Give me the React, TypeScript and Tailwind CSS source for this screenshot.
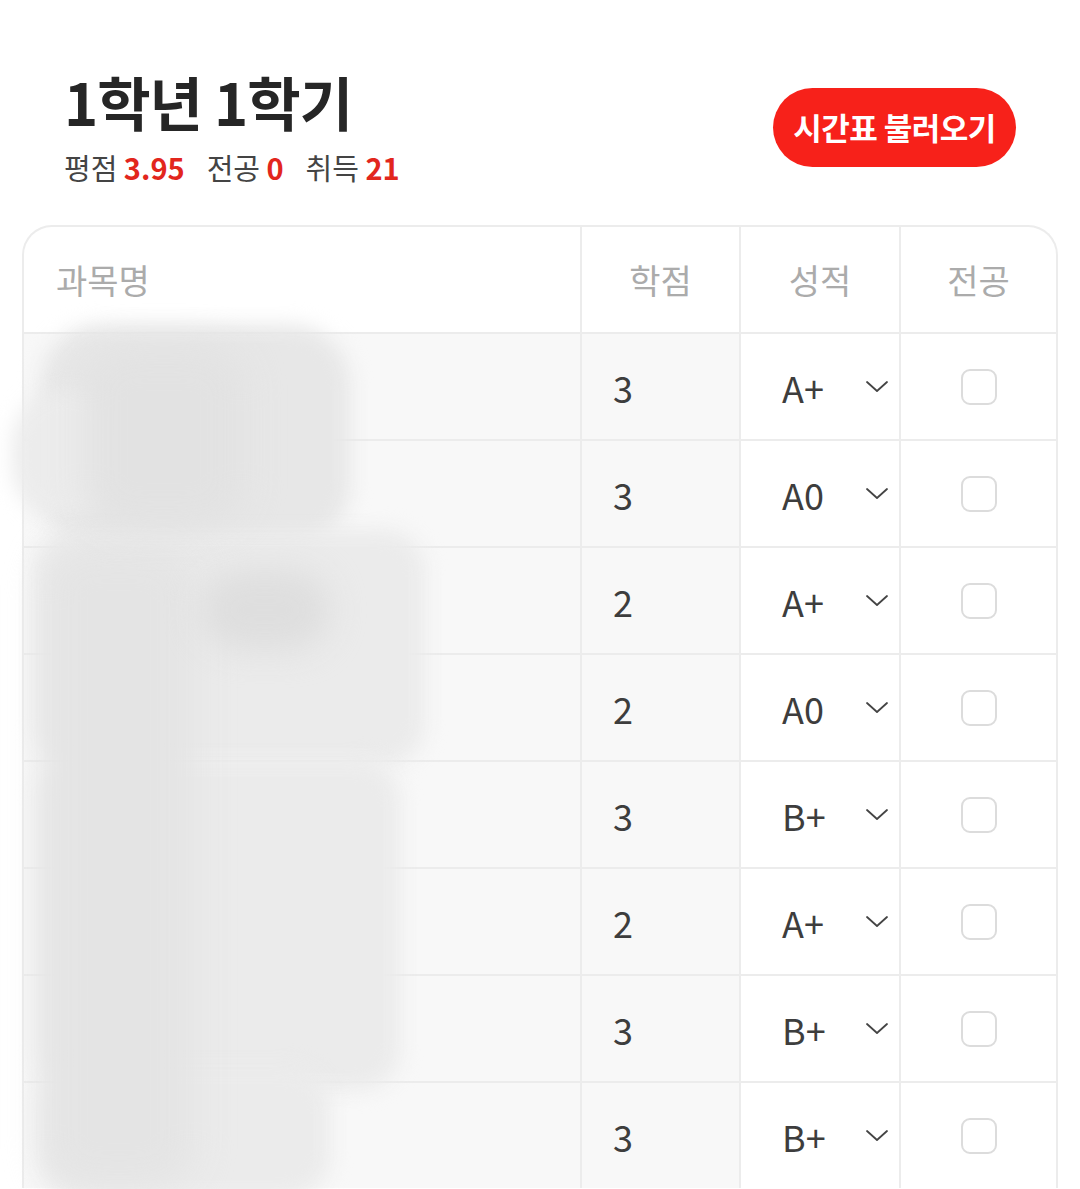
import React from 'react';

const rows = [
  { credit: 3, grade: 'A+' },
  { credit: 3, grade: 'A0' },
  { credit: 2, grade: 'A+' },
  { credit: 2, grade: 'A0' },
  { credit: 3, grade: 'B+' },
  { credit: 2, grade: 'A+' },
  { credit: 3, grade: 'B+' },
  { credit: 3, grade: 'B+' },
];

const font = { fontFamily: '"Noto Sans CJK KR", "Noto Sans", sans-serif' };

function Chevron() {
  return (
    <svg width="24" height="14" viewBox="0 0 24 14" fill="none">
      <path d="M2 2l10 9 10-9" stroke="#444" strokeWidth="1.8" strokeLinecap="round" strokeLinejoin="round" />
    </svg>
  );
}

export default function App() {
  return (
    <div className="min-h-[1189px] overflow-hidden bg-white" style={font}>
      <div className="flex items-start justify-between pt-[65px] pl-[64px] pr-[64px]">
        <div>
          <h1 className="text-[58px] leading-[72px] font-bold tracking-[-1px] text-[#262626]">1학년 1학기</h1>
          <div className="mt-[10px] flex items-center gap-[22px] text-[29px] leading-[40px] text-[#444]">
            <span>
              평점 <b className="font-bold text-[#e2261d]">3.95</b>
            </span>
            <span>
              전공 <b className="font-bold text-[#e2261d]">0</b>
            </span>
            <span>
              취득 <b className="font-bold text-[#e2261d]">21</b>
            </span>
          </div>
        </div>
        <button className="mt-[23px] h-[79px] w-[243px] rounded-full bg-[#f7211a] text-[31px] font-bold tracking-[-0.5px] text-white">
          시간표 불러오기
        </button>
      </div>

      <div className="relative mx-[22px] mt-[38px] rounded-t-[30px] border-2 border-b-0 border-[#ececec]">
        <div className="grid grid-cols-[556px_159px_160px_157px] text-[34px]">
          <div className="flex h-[105px] items-center pl-[32px] text-[#ababab]">과목명</div>
          <div className="flex h-[105px] items-center justify-center border-l-2 border-[#ececec] text-[#ababab]">학점</div>
          <div className="flex h-[105px] items-center justify-center border-l-2 border-[#ececec] text-[#ababab]">성적</div>
          <div className="flex h-[105px] items-center justify-center border-l-2 border-[#ececec] text-[#ababab]">전공</div>
          {rows.map((r, i) => (
            <React.Fragment key={i}>
              <div className="h-[107px] border-t-2 border-[#ececec] bg-[#f8f8f8]" />
              <div className="flex h-[107px] items-center border-t-2 border-l-2 border-[#ececec] bg-[#f8f8f8] pl-[31px] text-[36px] text-[#3d3d3d]">
                {r.credit}
              </div>
              <div className="flex h-[107px] items-center justify-between border-t-2 border-l-2 border-[#ececec] bg-white pl-[41px] pr-[10px] text-[36px] text-[#3d3d3d]">
                <span>{r.grade}</span>
                <Chevron />
              </div>
              <div className="flex h-[107px] items-center justify-center border-t-2 border-l-2 border-[#ececec] bg-white">
                <div className="h-[36px] w-[36px] rounded-[9px] border-2 border-[#dcdcdc] bg-white" />
              </div>
            </React.Fragment>
          ))}
        </div>

        {/* redaction blur over subject names */}
        <div className="pointer-events-none absolute left-0 top-0 h-[970px] w-[420px]">
          <div className="absolute left-[16px] top-[98px] h-[220px] w-[310px] rounded-[60px] bg-[#e7e7e7] blur-[10px]" />
          <div className="absolute left-[-12px] top-[163px] h-[130px] w-[110px] rounded-full bg-[#ececec] blur-[10px]" />
          <div className="absolute left-[11px] top-[303px] h-[235px] w-[390px] rounded-[40px] bg-[#ebebeb] blur-[10px]" />
          <div className="absolute left-[14px] top-[533px] h-[330px] w-[362px] rounded-[40px] bg-[#ebebeb] blur-[10px]" />
          <div className="absolute left-[16px] top-[840px] h-[130px] w-[290px] rounded-[40px] bg-[#ebebeb] blur-[10px]" />
          <div className="absolute left-[20px] top-[320px] h-[640px] w-[150px] rounded-[40px] bg-[#e4e4e4] blur-[18px]" />
          <div className="absolute left-[176px] top-[343px] h-[80px] w-[130px] rounded-full bg-[#dedede] blur-[16px]" />
          <div className="absolute left-[60px] top-[120px] h-[180px] w-[160px] rounded-[40px] bg-[#e2e2e2] blur-[18px]" />
        </div>
      </div>
    </div>
  );
}
